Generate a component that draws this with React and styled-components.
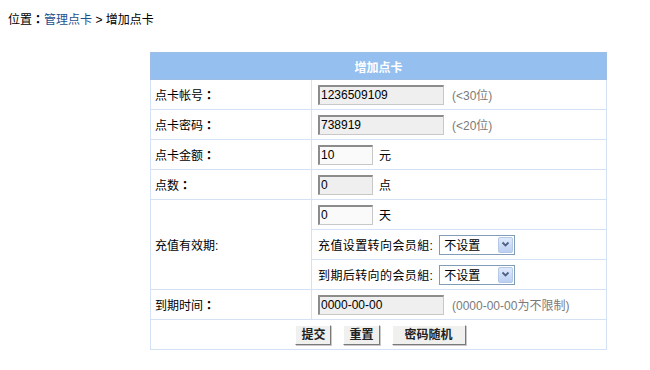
import React from "react";
import styled, { createGlobalStyle } from "styled-components";

const GlobalStyle = createGlobalStyle`
  body {
    margin: 0;
    background: #ffffff;
    font-family: "Liberation Sans", "Noto Sans CJK SC", sans-serif;
    font-size: 12px;
    color: #000;
  }
`;

const Page = styled.div`
  width: 650px;
  height: 370px;
  padding: 12px 8px 0;
  box-sizing: border-box;
`;

const Crumb = styled.div`
  height: 14px;
  line-height: 14px;
  font-size: 12px;
  a {
    color: #1c4f8f;
    text-decoration: none;
  }
`;

// full-width colon, centred in its cell like the original
const Colon = styled.span`
  font-family: "Noto Sans CJK TC", sans-serif;
  font-weight: bold;
`;

const Table = styled.table`
  margin: 26px 0 0 142px;
  width: 457px;
  border-collapse: collapse;
  border: 1px solid #9dbfe6;
  td {
    border: 1px solid #d3e2f4;
    padding: 0 4px;
    height: 29px;
    font-size: 12px;
  }
`;

const Head = styled.th`
  height: 24px;
  background: #94bfef;
  color: #fff;
  font-weight: bold;
  font-size: 12px;
  text-align: center;
  border-bottom: 1px solid #9dbfe6;
`;

const Label = styled.td`
  width: 152px;
`;

const Field = styled.td`
  padding-left: 6px !important;
`;

const Inline = styled.div`
  display: flex;
  align-items: center;
  gap: 6px;
`;

const Input = styled.div`
  width: ${(p) => p.w}px;
  height: 20px;
  box-sizing: border-box;
  border: 1px solid #c8c8c8;
  border-top: 2px solid #8c8c8c;
  border-left: 2px solid #8c8c8c;
  background: ${(p) => (p.light ? "#fafafa" : "#efefef")};
  padding-left: 1px;
  font-size: 12px;
  line-height: 17px;
  color: #000;
`;

const Hint = styled.span`
  color: #7a7a7a;
  margin-left: 2px;
`;

const Select = styled.div`
  width: 76px;
  height: 20px;
  box-sizing: border-box;
  border: 1px solid #7f9db9;
  background: #fff;
  display: flex;
  align-items: center;
  justify-content: space-between;
  padding: 0 1px 0 4px;
`;

const Arrow = styled.span`
  width: 15px;
  height: 16px;
  box-sizing: border-box;
  border: 1px solid #b5c8e6;
  border-radius: 2px;
  background: linear-gradient(#dfe9fb, #bcd0f2);
  display: flex;
  align-items: center;
  justify-content: center;
`;

const SubRow = styled.div`
  height: 29px;
  display: flex;
  align-items: center;
  gap: 6px;
  border-bottom: ${(p) => (p.last ? "none" : "1px solid #d3e2f4")};
  padding-left: 6px;
`;

const GroupLabel = styled.span`
  letter-spacing: 0.4px;
`;

const Buttons = styled.div`
  display: flex;
  justify-content: center;
  gap: 12px;
  padding-left: 4px;
`;

const Button = styled.span`
  height: 20px;
  box-sizing: border-box;
  padding: 0 ${(p) => p.pad || 5}px;
  border: 1px solid;
  border-color: #fff #7a7a7a #7a7a7a #fff;
  box-shadow: 1px 1px 0 #c8c8c8;
  background: #f0f0ee;
  line-height: 18px;
  font-weight: bold;
  color: #222;
`;

const Chevron = () => (
  <svg width="9" height="7" viewBox="0 0 9 7">
    <path d="M1.5 1.5 L4.5 4.5 L7.5 1.5" stroke="#4d6185" strokeWidth="1.8" fill="none" />
  </svg>
);

const App = () => (
  <Page>
    <GlobalStyle />
    <Crumb>
      位置<Colon>：</Colon>
      <a href="#">管理点卡</a> &gt; 增加点卡
    </Crumb>
    <Table>
      <thead>
        <tr>
          <Head colSpan={2}>增加点卡</Head>
        </tr>
      </thead>
      <tbody>
        <tr>
          <Label>点卡帐号<Colon>：</Colon></Label>
          <Field>
            <Inline>
              <Input w={126}>1236509109</Input>
              <Hint>(&lt;30位)</Hint>
            </Inline>
          </Field>
        </tr>
        <tr>
          <Label>点卡密码<Colon>：</Colon></Label>
          <Field>
            <Inline>
              <Input w={126}>738919</Input>
              <Hint>(&lt;20位)</Hint>
            </Inline>
          </Field>
        </tr>
        <tr>
          <Label>点卡金额<Colon>：</Colon></Label>
          <Field>
            <Inline>
              <Input w={55} light>10</Input>
              <span>元</span>
            </Inline>
          </Field>
        </tr>
        <tr>
          <Label>点数<Colon>：</Colon></Label>
          <Field>
            <Inline>
              <Input w={55}>0</Input>
              <span>点</span>
            </Inline>
          </Field>
        </tr>
        <tr>
          <Label>充值有效期:</Label>
          <td style={{ padding: 0 }}>
            <SubRow>
              <Input w={55} light>0</Input>
              <span>天</span>
            </SubRow>
            <SubRow>
              <GroupLabel>充值设置转向会员組:</GroupLabel>
              <Select>
                不设置
                <Arrow>
                  <Chevron />
                </Arrow>
              </Select>
            </SubRow>
            <SubRow last>
              <GroupLabel>到期后转向的会员組:</GroupLabel>
              <Select>
                不设置
                <Arrow>
                  <Chevron />
                </Arrow>
              </Select>
            </SubRow>
          </td>
        </tr>
        <tr>
          <Label>到期时间<Colon>：</Colon></Label>
          <Field>
            <Inline>
              <Input w={126}>0000-00-00</Input>
              <Hint>(0000-00-00为不限制)</Hint>
            </Inline>
          </Field>
        </tr>
        <tr>
          <td colSpan={2}>
            <Buttons>
              <Button pad={5}>提交</Button>
              <Button pad={5}>重置</Button>
              <Button pad={12}>密码随机</Button>
            </Buttons>
          </td>
        </tr>
      </tbody>
    </Table>
  </Page>
);

export default App;
